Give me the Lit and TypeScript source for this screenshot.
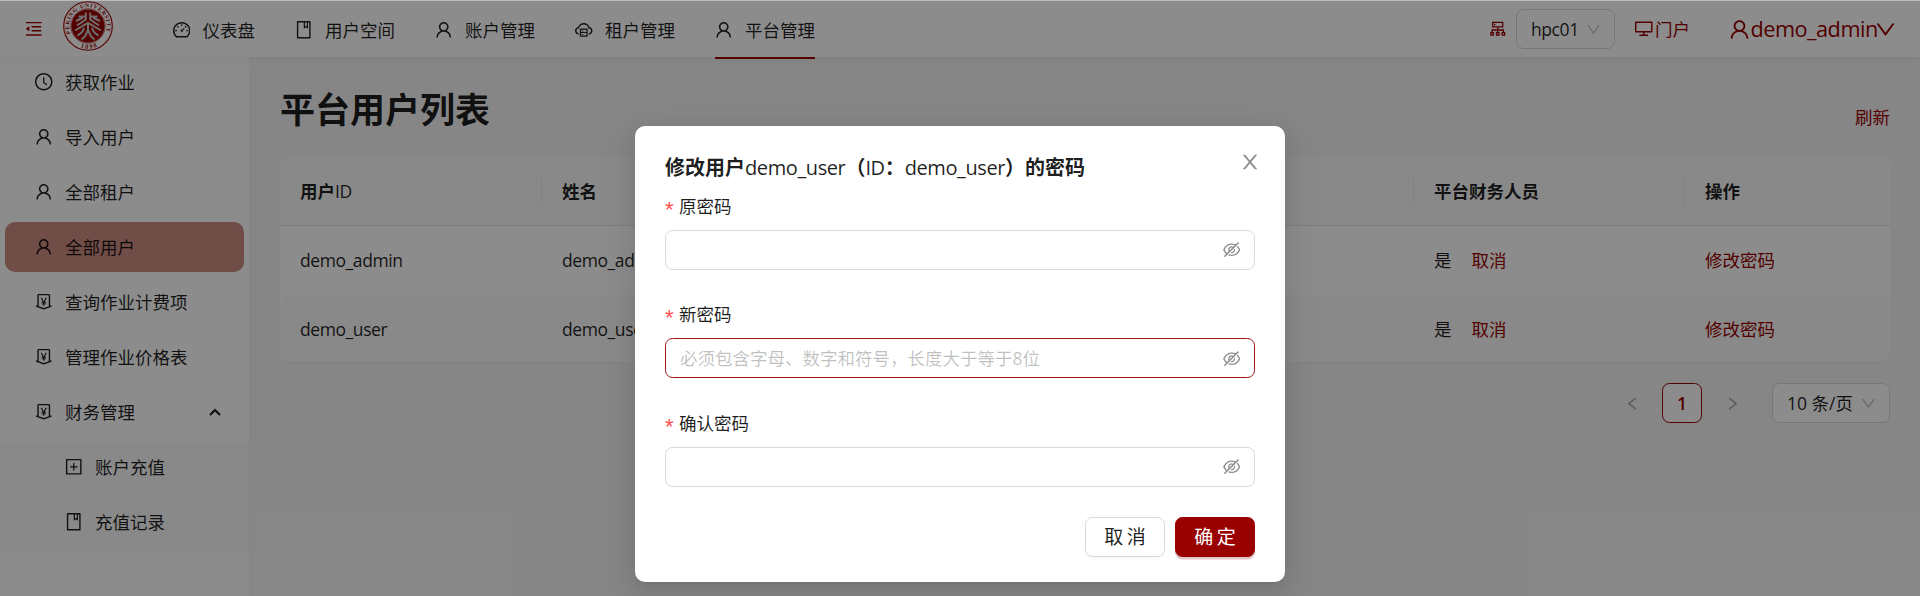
import { LitElement, html, svg, css, nothing } from "lit";
import { customElement, property } from "lit/decorators.js";

const ICONS: Record<string, string[]> = {
  user: ["M858.5 763.6a374 374 0 00-80.6-119.5 375.63 375.63 0 00-119.5-80.6c-.4-.2-.8-.3-1.2-.5C719.5 518 760 444.7 760 362c0-137-111-248-248-248S264 225 264 362c0 82.7 40.5 156 102.8 201.1-.4.2-.8.3-1.2.5-44.8 18.9-85 46-119.5 80.6a375.63 375.63 0 00-80.6 119.5A371.7 371.7 0 00136 901.8a8 8 0 008 8.2h60c4.4 0 7.9-3.5 8-7.8 2-77.2 33-149.5 87.8-204.3 56.7-56.7 132-87.9 212.2-87.9s155.5 31.2 212.2 87.9C779 752.7 810 825 812 902.2c.1 4.4 3.6 7.8 8 7.8h60a8 8 0 008-8.2c-1-47.8-10.9-94.3-29.5-138.2zM512 534c-45.9 0-89.1-17.9-121.6-50.4S340 407.9 340 362c0-45.9 17.9-89.1 50.4-121.6S466.1 190 512 190s89.1 17.9 121.6 50.4S684 316.1 684 362c0 45.9-17.9 89.1-50.4 121.6S557.9 534 512 534z"],
  clock: ["M512 64C264.6 64 64 264.6 64 512s200.6 448 448 448 448-200.6 448-448S759.4 64 512 64zm0 820c-205.4 0-372-166.6-372-372s166.6-372 372-372 372 166.6 372 372-166.6 372-372 372z", "M686.7 638.6L544.1 535.5V288c0-4.4-3.6-8-8-8H488c-4.4 0-8 3.6-8 8v275.4c0 2.6 1.2 5 3.3 6.5l165.4 120.6c3.6 2.6 8.6 1.8 11.2-1.7l28.6-39c2.6-3.7 1.8-8.7-1.8-11.2z"],
  book: ["M832 64H192c-17.7 0-32 14.3-32 32v832c0 17.7 14.3 32 32 32h640c17.7 0 32-14.3 32-32V96c0-17.7-14.3-32-32-32zm-260 72h96v209.9L621.5 312 572 347.4V136zm220 752H232V136h280v296.9c0 3.3 1 6.6 3 9.3a15.9 15.9 0 0022.3 3.7l83.8-59.9 81.4 59.4c2.7 2 6 3.1 9.4 3.1 8.8 0 16-7.2 16-16V136h64v752z"],
  plus: ["M328 544h152v152c0 4.4 3.6 8 8 8h48c4.4 0 8-3.6 8-8V544h152c4.4 0 8-3.6 8-8v-48c0-4.4-3.6-8-8-8H544V328c0-4.4-3.6-8-8-8h-48c-4.4 0-8 3.6-8 8v152H328c-4.4 0-8 3.6-8 8v48c0 4.4 3.6 8 8 8z", "M880 112H144c-17.7 0-32 14.3-32 32v736c0 17.7 14.3 32 32 32h736c17.7 0 32-14.3 32-32V144c0-17.7-14.3-32-32-32zm-40 728H184V184h656v656z"],
  down: ["M884 256h-75c-5.1 0-9.9 2.5-12.9 6.6L512 654.2 227.9 262.6c-3-4.1-7.8-6.6-12.9-6.6h-75c-6.5 0-10.3 7.4-6.5 12.7l352.6 486.1c12.8 17.6 39 17.6 51.7 0l352.6-486.1c3.9-5.3.1-12.7-6.4-12.7z"],
  left: ["M724 218.3V141c0-6.7-7.7-10.4-12.9-6.3L260.3 486.8a31.86 31.86 0 000 50.3l450.8 352.1c5.3 4.1 12.9.4 12.9-6.3v-77.3c0-4.9-2.3-9.6-6.1-12.6l-360-281 360-281.1c3.8-3 6.1-7.7 6.1-12.6z"],
  right: ["M765.7 486.8L314.9 134.7A7.97 7.97 0 00302 141v77.3c0 4.9 2.3 9.6 6.1 12.6l360 281.1-360 281.1c-3.9 3-6.1 7.7-6.1 12.6V883c0 6.7 7.7 10.4 12.9 6.3l450.8-352.1a31.96 31.96 0 000-50.4z"],
  close: ["M563.8 512l262.5-312.9c4.4-5.2.7-13.1-6.1-13.1h-79.8c-4.7 0-9.2 2.1-12.3 5.7L511.6 449.8 295.1 191.7c-3-3.6-7.5-5.7-12.3-5.7H203c-6.8 0-10.5 7.9-6.1 13.1L459.4 512 196.9 824.9A7.95 7.95 0 00203 838h79.8c4.7 0 9.2-2.1 12.3-5.7l216.5-258.1 216.5 258.1c3 3.6 7.5 5.7 12.3 5.7h79.8c6.8 0 10.5-7.9 6.1-13.1L563.8 512z"],
  desktop: ["M928 140H96c-17.7 0-32 14.3-32 32v496c0 17.7 14.3 32 32 32h380v112H304c-8.8 0-16 7.2-16 16v48c0 4.4 3.6 8 8 8h432c4.4 0 8-3.6 8-8v-48c0-8.8-7.2-16-16-16H548V700h380c17.7 0 32-14.3 32-32V172c0-17.7-14.3-32-32-32zm-40 488H136V212h752v416z"],
  fold: ["M408 442h480c4.4 0 8-3.6 8-8v-56c0-4.4-3.6-8-8-8H408c-4.4 0-8 3.6-8 8v56c0 4.4 3.6 8 8 8zm-8 204c0 4.4 3.6 8 8 8h480c4.4 0 8-3.6 8-8v-56c0-4.4-3.6-8-8-8H408c-4.4 0-8 3.6-8 8v56zm504-486H120c-4.4 0-8 3.6-8 8v56c0 4.4 3.6 8 8 8h784c4.4 0 8-3.6 8-8v-56c0-4.4-3.6-8-8-8zm0 632H120c-4.4 0-8 3.6-8 8v56c0 4.4 3.6 8 8 8h784c4.4 0 8-3.6 8-8v-56c0-4.4-3.6-8-8-8zM115.4 518.9L271.7 642c5.8 4.6 14.4.5 14.4-6.9V388.9c0-7.4-8.5-11.5-14.4-6.9L115.4 505.1a8.74 8.74 0 000 13.8z"],
  eye: ["M942.2 486.2Q889.47 375.11 816.7 305l-50.88 50.88C807.31 395.53 843.45 447.4 874.7 512 791.5 684.2 673.4 766 512 766q-72.67 0-133.87-22.38L323 798.75Q408 838 512 838q288.3 0 430.2-300.3a60.29 60.29 0 000-51.5zm-63.57-320.64L836 122.88a8 8 0 00-11.32 0L715.31 232.2Q624.86 186 512 186q-288.3 0-430.2 300.3a60.3 60.3 0 000 51.5q56.69 119.4 136.5 191.41L112.48 835a8 8 0 000 11.31L155.17 889a8 8 0 0011.31 0l712.15-712.12a8 8 0 000-11.32zM149.3 512C232.6 339.8 350.7 258 512 258c54.54 0 104.13 9.36 149.12 28.39l-70.3 70.3a176 176 0 00-238.13 238.13l-83.42 83.42C223.1 637.49 183.3 582.28 149.3 512zm246.7 0a112.11 112.11 0 01146.2-106.69L401.31 546.2A112 112 0 01396 512z", "M508 624c-3.46 0-6.87-.16-10.25-.47l-52.82 52.82a176.09 176.09 0 00227.42-227.42l-52.82 52.82c.31 3.38.47 6.79.47 10.25a111.94 111.94 0 01-112 112z"],
  dashboard: ["M924.8 385.6a446.7 446.7 0 00-96-142.4 446.7 446.7 0 00-142.4-96C631.1 123.8 572.5 112 512 112s-119.1 11.8-174.4 35.2a446.7 446.7 0 00-142.4 96 446.7 446.7 0 00-96 142.4C75.8 440.9 64 499.5 64 560c0 132.7 58.3 257.7 159.9 343.1l1.7 1.4c5.8 4.8 13.1 7.5 20.6 7.5h531.7c7.5 0 14.8-2.7 20.6-7.5l1.7-1.4C901.7 817.7 960 692.7 960 560c0-60.5-11.9-119.1-35.2-174.4zM761.4 836H262.6A371.12 371.12 0 01140 560c0-99.4 38.7-192.8 109-263 70.3-70.3 163.7-109 263-109 99.4 0 192.8 38.7 263 109 70.3 70.3 109 163.7 109 263 0 105.6-44.5 205.5-122.6 276zM623.5 421.5a8.03 8.03 0 00-11.3 0L527.7 506c-18.7-5-39.4-.2-54.1 14.5a55.95 55.95 0 000 79.2 55.95 55.95 0 0079.2 0 55.87 55.87 0 0014.5-54.1l84.5-84.5c3.1-3.1 3.1-8.2 0-11.3l-28.3-28.3zM490 320h44c4.4 0 8-3.6 8-8v-80c0-4.4-3.6-8-8-8h-44c-4.4 0-8 3.6-8 8v80c0 4.4 3.6 8 8 8zm260 218v44c0 4.4 3.6 8 8 8h80c4.4 0 8-3.6 8-8v-44c0-4.4-3.6-8-8-8h-80c-4.4 0-8 3.6-8 8zm12.7-197.2l-31.1-31.1a8.03 8.03 0 00-11.3 0l-56.6 56.6a8.03 8.03 0 000 11.3l31.1 31.1c3.1 3.1 8.2 3.1 11.3 0l56.6-56.6c3.1-3.1 3.1-8.2 0-11.3zm-458.6-31.1a8.03 8.03 0 00-11.3 0l-31.1 31.1a8.03 8.03 0 000 11.3l56.6 56.6c3.1 3.1 8.2 3.1 11.3 0l31.1-31.1c3.1-3.1 3.1-8.2 0-11.3l-56.6-56.6zM262 530h-80c-4.4 0-8 3.6-8 8v44c0 4.4 3.6 8 8 8h80c4.4 0 8-3.6 8-8v-44c0-4.4-3.6-8-8-8z"],
  cloud: ["M704 446H320c-4.4 0-8 3.6-8 8v402c0 4.4 3.6 8 8 8h384c4.4 0 8-3.6 8-8V454c0-4.4-3.6-8-8-8zm-328 64h272v117H376V510zm272 290H376V683h272v117z", "M424 748a32 32 0 1064 0 32 32 0 10-64 0zm0-178a32 32 0 1064 0 32 32 0 10-64 0z", "M811.4 368.9C765.6 248 648.9 162 512.2 162S258.8 247.9 213 368.8C126.9 391.5 63.5 470.2 64 563.6 64.6 668 145.6 752.9 247.6 762c4.7.4 8.7-3.3 8.7-8v-60.4c0-4-3-7.4-7-7.9-27-3.4-52.5-15.2-72.1-34.5-24-23.5-37.2-55.1-37.2-88.6 0-28 9.1-54.4 26.2-76.4 16.7-21.4 40.2-36.9 66.1-43.7l37.9-10 13.9-36.7c8.6-22.8 20.6-44.2 35.7-63.5 14.9-19.2 32.6-36 52.4-50 41.1-28.9 89.5-44.2 140-44.2s98.9 15.3 140 44.2c19.9 14 37.5 30.8 52.4 50 15.1 19.3 27.1 40.7 35.7 63.5l13.8 36.6 37.8 10c54.2 14.4 92.1 63.7 92.1 120 0 33.6-13.2 65.1-37.2 88.6-19.5 19.2-44.9 31.1-71.9 34.5-4 .5-6.9 3.9-6.9 7.9V754c0 4.7 4.1 8.4 8.8 8 101.7-9.2 182.5-94 183.2-198.2.6-93.4-62.7-172.1-148.6-194.9z"],
  money: ["M911.5 700.7a8 8 0 00-10.3-4.8L840 718.2V180c0-37.6-30.4-68-68-68H252c-37.6 0-68 30.4-68 68v538.2l-61.3-22.3c-.9-.3-1.8-.5-2.7-.5-4.4 0-8 3.6-8 8V763c0 3.3 2.1 6.3 5.3 7.5L501 910.1c7.1 2.6 14.8 2.6 21.9 0l383.8-139.5c3.2-1.2 5.3-4.2 5.3-7.5v-59.6c0-1-.2-1.9-.5-2.8zM512 837.5l-256-93.1V184h512v560.4l-256 93.1z", "M660.6 312h-54.5c-3 0-5.8 1.7-7.1 4.4l-84.7 168.8H511l-84.7-168.8a8 8 0 00-7.1-4.4h-55.7c-1.3 0-2.6.3-3.8 1-3.9 2.1-5.3 7-3.2 10.8l103.9 191.6h-57c-4.4 0-8 3.6-8 8v27.1c0 4.4 3.6 8 8 8h76v39h-76c-4.4 0-8 3.6-8 8v27.1c0 4.4 3.6 8 8 8h76V704c0 4.4 3.6 8 8 8h49.9c4.4 0 8-3.6 8-8v-63.5h76.3c4.4 0 8-3.6 8-8v-27.1c0-4.4-3.6-8-8-8h-76.3v-39h76.3c4.4 0 8-3.6 8-8v-27.1c0-4.4-3.6-8-8-8H564l103.7-191.6c.6-1.2 1-2.5 1-3.8-.1-4.3-3.7-7.9-8.1-7.9z"],
  cluster: ["M888 680h-54V540H546v-92h238c8.8 0 16-7.2 16-16V168c0-8.8-7.2-16-16-16H240c-8.8 0-16 7.2-16 16v264c0 8.8 7.2 16 16 16h238v92H190v140h-54c-4.4 0-8 3.6-8 8v176c0 4.4 3.6 8 8 8h176c4.4 0 8-3.6 8-8V688c0-4.4-3.6-8-8-8h-54v-72h220v72h-54c-4.4 0-8 3.6-8 8v176c0 4.4 3.6 8 8 8h176c4.4 0 8-3.6 8-8V688c0-4.4-3.6-8-8-8h-54v-72h220v72h-54c-4.4 0-8 3.6-8 8v176c0 4.4 3.6 8 8 8h176c4.4 0 8-3.6 8-8V688c0-4.4-3.6-8-8-8zM256 808h-64v-64h64zm288 0h-64v-64h64zM288 384V216h448v168H288zm544 424h-64v-64h64z", "M320 300a40 40 0 1080 0 40 40 0 10-80 0z"],
};

@customElement("ui-icon")
class UiIcon extends LitElement {
  static styles = css`
    :host { display: block; flex: none; width: 17.5px; height: 17.5px; }
    svg { display: block; width: 100%; height: 100%; }
  `;
  @property() name = "";
  render() {
    return html`<svg viewBox="64 64 896 896" fill="currentColor" fill-rule="evenodd">
      ${(ICONS[this.name] ?? []).map((d) => svg`<path d=${d}></path>`)}
    </svg>`;
  }
}

@customElement("school-logo")
class SchoolLogo extends LitElement {
  static styles = css`
    :host { display: block; flex: none; width: 50px; height: 50px; }
    svg { display: block; }
    text { font-family: "Liberation Serif", serif; font-weight: 700; fill: #990000; }
  `;
  render() {
    return html`<svg width="50" height="50" viewBox="0 0 50 50">
      <circle cx="25" cy="25" r="24.3" fill="none" stroke="#990000" stroke-width="1.1"></circle>
      <circle cx="25" cy="25" r="16.6" fill="#990000"></circle>
      <circle cx="25" cy="25" r="17.2" fill="none" stroke="#990000" stroke-width=".6"></circle>
      <defs>
        <path id="top" d="M7.6 32.5A18.9 18.9 0 1 1 42.4 32.5"></path>
        <path id="bottom" d="M13.5 44.4A22.5 22.5 0 0 0 36.5 44.4"></path>
      </defs>
      <text font-size="5.6"><textPath href="#top" textLength="72">PEKING UNIVERSITY</textPath></text>
      <text font-size="6.2"><textPath href="#bottom" startOffset="4.5" textLength="17">1898</textPath></text>
      <g fill="none" stroke="#c9c9c9" stroke-width="2" stroke-linejoin="round">
        <path d="M22.8 11.5V18.5L14 24.5M27.2 11.5V18.5L36 24.5"></path>
        <path d="M15.5 15.5L22 15.5M34.5 15.5L28 15.5M13 20L20 16.5M37 20L30 16.5"></path>
        <path d="M12 29.5L25 21.8L38 29.5"></path>
        <path d="M25 22V28"></path>
        <path d="M14.5 34.5C17.5 33 20 30.5 21 27M35.5 34.5C32.5 33 30 30.5 29 27"></path>
        <path d="M18.5 38.5C21.5 36.5 23.6 33.5 25 28.5C26.4 33.5 28.5 36.5 31.5 38.5"></path>
      </g>
    </svg>`;
  }
}

interface Item { icon: string; label: string; active?: boolean; open?: boolean; }

const NAV: Item[] = [
  { icon: "dashboard", label: "仪表盘" },
  { icon: "book", label: "用户空间" },
  { icon: "user", label: "账户管理" },
  { icon: "cloud", label: "租户管理" },
  { icon: "user", label: "平台管理", active: true },
];
const MENU: Item[] = [
  { icon: "clock", label: "获取作业" },
  { icon: "user", label: "导入用户" },
  { icon: "user", label: "全部租户" },
  { icon: "user", label: "全部用户", active: true },
  { icon: "money", label: "查询作业计费项" },
  { icon: "money", label: "管理作业价格表" },
  { icon: "money", label: "财务管理", open: true },
];
const SUBMENU: Item[] = [
  { icon: "plus", label: "账户充值" },
  { icon: "book", label: "充值记录" },
];
const FIELDS = [
  { label: "原密码", placeholder: "", focus: false },
  { label: "新密码", placeholder: "必须包含字母、数字和符号，长度大于等于8位", focus: true },
  { label: "确认密码", placeholder: "", focus: false },
];

@customElement("app-root")
class AppRoot extends LitElement {
  static styles = css`
    :host {
      display: block; position: relative; width: 100%; height: 596px; overflow: hidden;
      font: 17.5px/27.5px "Open Sans", "Noto Sans CJK SC", sans-serif;
      font-weight: 400; color: rgba(0, 0, 0, .88); background: #f5f5f5;
    }
    * { box-sizing: border-box; }
    .page { display: flex; flex-direction: column; height: 100%; border-top: 1px solid #fff; }
    .header {
      display: flex; align-items: center; height: 56px; flex: none; position: relative; z-index: 1;
      padding: 0 24px 0 25px; background: #fff; box-shadow: 0 2px 8px rgba(0, 0, 0, .06);
    }
    .red { color: #990000; }
    .latin { letter-spacing: -.42px; }
    .logo { margin: 0 59.5px 6px 20.5px; }
    .nav { display: flex; gap: 40px; height: 58px; align-self: flex-start; }
    .nav-item { display: flex; align-items: center; gap: 12.5px; border-bottom: 2px solid transparent; padding-top: 2px; }
    .nav-item span, .portal span, .item span { padding-top: 1.5px; }
    .nav-item.active { border-color: #990000; }
    .tools { display: flex; align-items: center; margin-left: auto; }
    .select {
      display: flex; align-items: center; justify-content: space-between; height: 40px;
      border: 1px solid #d9d9d9; border-radius: 7.5px; background: #fff; padding: 0 13px 0 14px;
    }
    .select span { padding-top: 1.5px; }
    .select ui-icon { width: 15px; height: 15px; color: rgba(0, 0, 0, .25); }
    .cluster { width: 99px; margin-left: 10px; }
    .portal { display: flex; align-items: center; gap: 2.5px; margin-left: 20px; }
    .account { display: flex; align-items: center; margin-left: 39px; font-size: 21.7px; letter-spacing: -.5px; }
    .account ui-icon { width: 21px; height: 21px; }
    .account span { width: 124.5px; margin-left: .5px; white-space: nowrap; }
    .body { display: flex; flex: 1; min-height: 0; }
    .sider { width: 250px; flex: none; background: #fff; border-right: 1px solid #f0f0f0; }
    .item { display: flex; align-items: center; gap: 12.5px; height: 50px; margin: 0 5px 5px 5px; padding-left: 30px; border-radius: 10px; }
    .item.active { background: #ce8d84; }
    .arrow { width: 12px; height: 8px; margin: 0 23px 0 auto; }
    .sub { background: #fafafa; height: 110px; }
    .sub .item { padding-left: 60px; }
    .content { flex: 1; padding: 0 30px; display: flex; flex-direction: column; }
    .title-row { display: flex; justify-content: space-between; height: 100px; }
    h1 { margin: 29px 0 0; font-size: 35px; line-height: 48px; font-weight: 700; }
    .refresh { margin-top: 47px; }
    .table { height: 206px; border-radius: 10px; overflow: hidden; background: #fff; border-bottom: 1px solid #eee; }
    .row { display: grid; grid-template-columns: 262px 1fr 271px 205px; height: 68.5px; align-items: center; }
    .cell { display: flex; padding: 1.5px 0 0 20px; white-space: nowrap; }
    .cell .action { margin-left: 20px; }
    .thead { background: #fafafa; border-bottom: 1px solid #eaeaea; font-weight: 600; height: 69px; }
    .thead .cell { border-right: 1px solid #ededed; }
    .thead .cell:last-child { border-right: 0; }
    .thead .latin { font-weight: 500; }
    .stripe { background: #fafafa; border-radius: 10px; }
    .pager { display: flex; justify-content: flex-end; align-items: center; gap: 10px; margin-top: 20px; }
    .page-btn { width: 40px; height: 40px; display: flex; align-items: center; justify-content: center; color: rgba(0, 0, 0, .35); }
    .page-btn ui-icon { width: 15px; height: 15px; }
    .page-btn.current { border: 1px solid #990000; border-radius: 7.5px; background: #fff; color: #990000; font-weight: 600; padding-top: 1.5px; }
    .size { width: 118px; margin-left: 10px; padding: 0 13px 0 14px; }
    .mask { position: absolute; inset: 0; background: rgba(0, 0, 0, .45); z-index: 2; }
    .edge { position: absolute; inset: 0 0 auto; height: 1px; background: #b9bcbb; z-index: 3; }
    .modal {
      position: absolute; z-index: 4; left: 635px; top: 126px; width: 650px; height: 456px; padding: 26px 30px 25px;
      background: #fff; border-radius: 10px; display: flex; flex-direction: column;
      box-shadow: 0 7.5px 20px rgba(0, 0, 0, .08), 0 3.75px 7.5px -5px rgba(0, 0, 0, .12), 0 11.25px 35px 10px rgba(0, 0, 0, .05);
    }
    .modal-head { display: flex; justify-content: space-between; height: 40px; }
    .modal-title { font-size: 20px; line-height: 32px; font-weight: 600; white-space: nowrap; }
    .modal-title .latin { font-weight: 500; letter-spacing: -.4px; }
    .modal-head ui-icon { width: 20px; height: 20px; margin-right: -5px; color: rgba(0, 0, 0, .45); }
    .field { height: 108.5px; }
    .label { display: flex; gap: 5px; height: 38px; line-height: 29px; }
    .star { color: #ff4d4f; font-family: "Liberation Sans", sans-serif; width: 9px; font-size: 22px; line-height: 35px; }
    .input {
      display: flex; align-items: center; justify-content: space-between; height: 40px; padding: 0 14px;
      border: 1px solid #d9d9d9; border-radius: 7.5px;
    }
    .input.focus { border-color: #a31515; }
    .placeholder { color: rgba(0, 0, 0, .25); padding-top: 1px; }
    .input ui-icon { color: rgba(0, 0, 0, .45); margin-left: auto; }
    .actions { display: flex; justify-content: flex-end; gap: 10px; margin-top: auto; }
    .btn {
      width: 80px; height: 40px; border-radius: 7.5px; border: 1px solid #d9d9d9; background: #fff; padding: 1.5px 0 0 3.5px;
      display: flex; align-items: center; justify-content: center; font-size: 19px; letter-spacing: 3.5px;
      box-shadow: 0 2.5px 0 rgba(0, 0, 0, .02);
    }
    .btn.primary { background: #990000; border-color: #990000; color: #fff; box-shadow: 0 2.5px 0 rgba(120, 0, 10, .22); }
  `;

  private item(i: Item) {
    return html`<div class="item ${i.active ? "active" : ""}">
      <ui-icon name=${i.icon}></ui-icon><span>${i.label}</span>
      ${i.open ? html`<svg class="arrow" viewBox="0 0 12 8"><path d="M1 7L6 2L11 7" fill="none" stroke="#1f1f1f" stroke-width="2.2"></path></svg>` : nothing}
    </div>`;
  }

  private row(name: string, stripe: boolean) {
    return html`<div class="row ${stripe ? "stripe" : ""}">
      <div class="cell latin">${name}</div>
      <div class="cell latin">${name}</div>
      <div class="cell"><span>是</span><span class="action red">取消</span></div>
      <div class="cell red">修改密码</div>
    </div>`;
  }

  render() {
    return html`
      <div class="page">
        <div class="header">
          <ui-icon class="red" name="fold"></ui-icon>
          <school-logo class="logo"></school-logo>
          <div class="nav">
            ${NAV.map((n) => html`<div class="nav-item ${n.active ? "active" : ""}"><ui-icon name=${n.icon}></ui-icon><span>${n.label}</span></div>`)}
          </div>
          <div class="tools">
            <ui-icon class="red" name="cluster"></ui-icon>
            <div class="select cluster"><span class="latin">hpc01</span><ui-icon name="down"></ui-icon></div>
            <div class="portal red"><ui-icon name="desktop"></ui-icon><span>门户</span></div>
            <div class="account red"><ui-icon name="user"></ui-icon><span>demo_admin</span><ui-icon name="down"></ui-icon></div>
          </div>
        </div>
        <div class="body">
          <div class="sider">
            ${MENU.map((m) => this.item(m))}
            <div class="sub">${SUBMENU.map((m) => this.item(m))}</div>
          </div>
          <div class="content">
            <div class="title-row"><h1>平台用户列表</h1><div class="refresh red">刷新</div></div>
            <div class="table">
              <div class="row thead">
                <div class="cell">用户<span class="latin">ID</span></div><div class="cell">姓名</div><div class="cell">平台财务人员</div><div class="cell">操作</div>
              </div>
              ${this.row("demo_admin", false)}
              ${this.row("demo_user", true)}
            </div>
            <div class="pager">
              <div class="page-btn"><ui-icon name="left"></ui-icon></div>
              <div class="page-btn current">1</div>
              <div class="page-btn"><ui-icon name="right"></ui-icon></div>
              <div class="select size"><span>10 条/页</span><ui-icon name="down"></ui-icon></div>
            </div>
          </div>
        </div>
      </div>
      <div class="mask"></div>
      <div class="edge"></div>
      <div class="modal">
        <div class="modal-head">
          <div class="modal-title">修改用户<span class="latin">demo_user</span>（<span class="latin">ID</span>：<span class="latin">demo_user</span>）的密码</div>
          <ui-icon name="close"></ui-icon>
        </div>
        ${FIELDS.map((f) => html`<div class="field">
          <div class="label"><span class="star">*</span><span>${f.label}</span></div>
          <div class="input ${f.focus ? "focus" : ""}">
            ${f.placeholder ? html`<span class="placeholder">${f.placeholder}</span>` : nothing}
            <ui-icon name="eye"></ui-icon>
          </div>
        </div>`)}
        <div class="actions"><div class="btn">取消</div><div class="btn primary">确定</div></div>
      </div>
    `;
  }
}
